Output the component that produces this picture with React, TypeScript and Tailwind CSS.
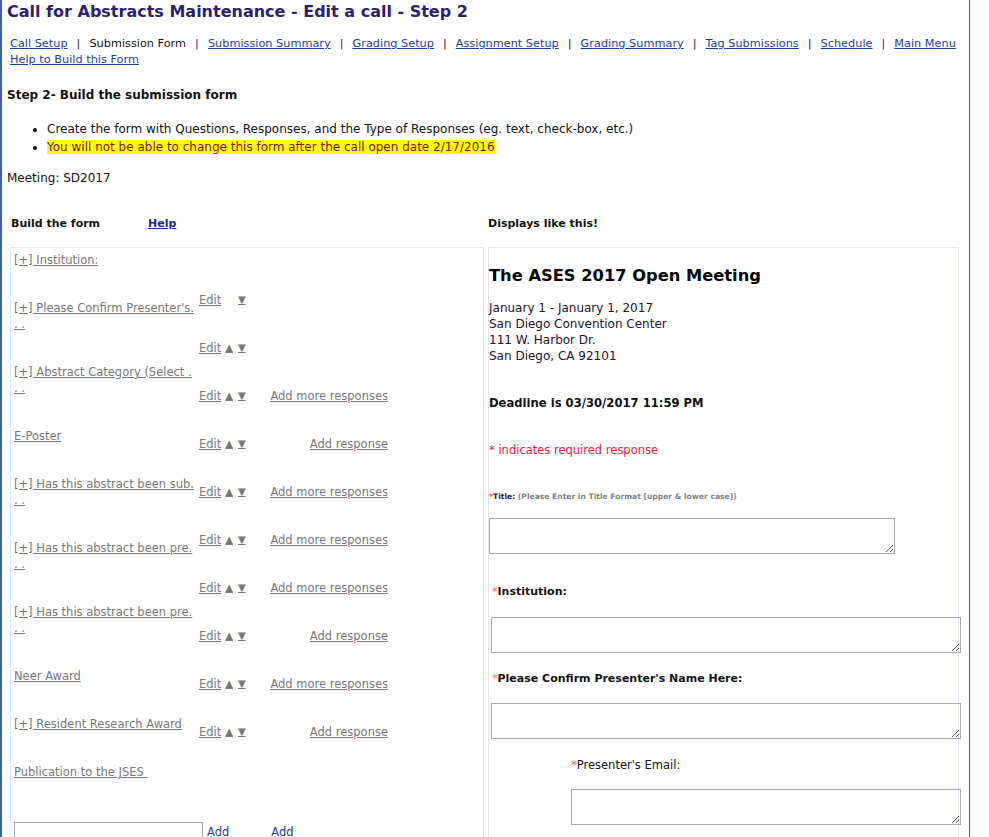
import React from "react";

const navLinks = [
  { label: "Call Setup", link: true, sep: "dark" },
  { label: "Submission Form", link: false, sep: "purple" },
  { label: "Submission Summary", link: true, sep: "purple" },
  { label: "Grading Setup", link: true, sep: "dark" },
  { label: "Assignment Setup", link: true, sep: "dark" },
  { label: "Grading Summary", link: true, sep: "dark" },
  { label: "Tag Submissions", link: true, sep: "dark" },
  { label: "Schedule", link: true, sep: "purple" },
  { label: "Main Menu", link: true, sep: null },
];

// label column of the builder, each entry is its lines
const labels: string[][] = [
  ["[+] Institution:"],
  ["[+] Please Confirm Presenter's.", ". ."],
  ["[+] Abstract Category (Select .", ". ."],
  ["E-Poster"],
  ["[+] Has this abstract been sub.", ". ."],
  ["[+] Has this abstract been pre.", ". ."],
  ["[+] Has this abstract been pre.", ". ."],
  ["Neer Award"],
  ["[+] Resident Research Award"],
  ["Publication to the JSES\u00a0"],
];

type Action = { up: boolean; add: "" | "more" | "one" };

const actions: Action[] = [
  { up: false, add: "" },
  { up: true, add: "" },
  { up: true, add: "more" },
  { up: true, add: "one" },
  { up: true, add: "more" },
  { up: true, add: "more" },
  { up: true, add: "more" },
  { up: true, add: "one" },
  { up: true, add: "more" },
  { up: true, add: "one" },
];

const Req = () => <span className="text-[#ff6a3d] font-normal">*</span>;

const ActionRow = ({ action }: { action: Action }) => (
  <div className="flex h-[48px] leading-[16px] text-[#777]">
    <div className="w-[71px] flex">
      <span className="underline">Edit</span>
      <span className={"ml-[4px] underline text-[10px] " + (action.up ? "" : "invisible")}>▲</span>
      <span className="ml-[5px] underline text-[10px]">▼</span>
    </div>
    <div className="w-[118px] text-right whitespace-nowrap">
      {action.add === "more" && <span className="underline">Add more responses</span>}
      {action.add === "one" && <span className="underline">Add response</span>}
    </div>
  </div>
);

export default function App() {
  return (
    <div className="min-h-screen bg-[#fafafa] font-['DejaVu_Sans',Verdana,sans-serif] text-[11px] text-[#111]">
      <div className="w-[970px] min-h-screen bg-white border-l-2 border-r border-[#3f5fa8] overflow-hidden">
        {/* Header */}
        <h1 className="pl-[5px] text-[16px] leading-[24px] font-bold text-[#2e1f6e]">
          Call for Abstracts Maintenance - Edit a call - Step 2
        </h1>

        {/* Navigation */}
        <div className="mt-[12px] pl-[8px] leading-[16px] text-[11.3px]">
          <div className="flex whitespace-nowrap">
            {navLinks.map((n) => (
              <React.Fragment key={n.label}>
                <span className={n.link ? "underline text-[#1f3b99]" : "text-[#111]"}>{n.label}</span>
                {n.sep && (
                  <span className={"px-[9px] " + (n.sep === "purple" ? "text-[#800080]" : "text-[#222]")}>|</span>
                )}
              </React.Fragment>
            ))}
          </div>
          <div className="underline text-[#1f3b99] w-fit">Help to Build this Form</div>
        </div>

        {/* Step heading */}
        <h2 className="mt-[19px] pl-[5px] text-[12px] leading-[16px] font-bold">Step 2- Build the submission form</h2>
        <ul className="mt-[17px] pl-[45px] list-disc text-[12px] leading-[18px]">
          <li>Create the form with Questions, Responses, and the Type of Responses (eg. text, check-box, etc.)</li>
          <li>
            <span className="bg-[#ffff00] text-[#7b1111]">
              You will not be able to change this form after the call open date 2/17/2016
            </span>
          </li>
        </ul>
        <div className="mt-[14px] pl-[5px] text-[12px] leading-[16px]">Meeting: SD2017</div>

        {/* Column headers */}
        <div className="mt-[30px] flex leading-[16px] font-bold">
          <div className="w-[486px] pl-[9px] flex">
            <span className="w-[137px]">Build the form</span>
            <span className="underline text-[#1a2a8a]">Help</span>
          </div>
          <div>Displays like this!</div>
        </div>

        {/* Panels */}
        <div className="mt-[15px] ml-[8px] flex gap-[4px] items-start">
          {/* Builder */}
          <div className="w-[474px] h-[620px] border border-[#e3e6f2] pl-[3px] pt-[4px] text-[11.5px]">
            <div className="flex">
              <div className="w-[185px] leading-[16px] text-[#777] whitespace-nowrap">
                {labels.map((lines, i) => (
                  <div key={i} className="mb-[32px]">
                    {lines.map((l, j) => (
                      <div key={j}>
                        <span className="underline">{l}</span>
                      </div>
                    ))}
                  </div>
                ))}
              </div>
              <div className="pt-[40px]">
                {actions.map((a, i) => (
                  <ActionRow key={i} action={a} />
                ))}
              </div>
            </div>
            <div className="mt-[10px] flex items-start">
              <input className="w-[189px] h-[24px] border border-[#a9a9a9] bg-white" />
              <span className="ml-[4px] pt-[2px] underline text-[#1f3b99] leading-[16px]">Add</span>
              <span className="ml-[42px] pt-[2px] underline text-[#1f3b99] leading-[16px]">Add</span>
            </div>
          </div>

          {/* Preview */}
          <div className="w-[471px] h-[620px] border border-[#e3e6f2]">
            <div className="mt-[18px] text-[16.3px] leading-[20px] font-bold text-black">The ASES 2017 Open Meeting</div>
            <div className="mt-[14px] text-[12px] leading-[16px] text-[#1d1230]">
              <div>January 1 - January 1, 2017</div>
              <div>San Diego Convention Center</div>
              <div>111 W. Harbor Dr.</div>
              <div>San Diego, CA 92101</div>
            </div>
            <div className="mt-[31px] text-[11.6px] leading-[16px] font-bold">Deadline is 03/30/2017 11:59 PM</div>
            <div className="mt-[31px] text-[11.5px] leading-[16px] text-[#e8173f]">* indicates required response</div>
            <div className="mt-[33px] text-[7.6px] leading-[12px] font-bold">
              <span className="text-[#ff3b3b]">*</span>
              <span className="text-[#1d1230]">Title: </span>
              <span className="text-[#7f7f7f]">(Please Enter in Title Format [upper &amp; lower case])</span>
            </div>
            <textarea className="mt-[15px] block w-[406px] h-[36px] border border-[#a9a9a9]" />

            <div className="mt-[30px] ml-[3px] leading-[16px] font-bold">
              <Req />
              Institution:
            </div>
            <textarea className="mt-[17px] ml-[2px] block w-[470px] h-[36px] border border-[#a9a9a9]" />

            <div className="mt-[18px] ml-[3px] leading-[16px] font-bold">
              <Req />
              Please Confirm Presenter's Name Here:
            </div>
            <textarea className="mt-[16px] ml-[2px] block w-[470px] h-[36px] border border-[#a9a9a9]" />

            <div className="mt-[18px] ml-[82px] leading-[16px] text-[11.5px]">
              <Req />
              Presenter's Email:
            </div>
            <textarea className="mt-[16px] ml-[82px] block w-[390px] h-[36px] border border-[#a9a9a9]" />
          </div>
        </div>
      </div>
    </div>
  );
}
